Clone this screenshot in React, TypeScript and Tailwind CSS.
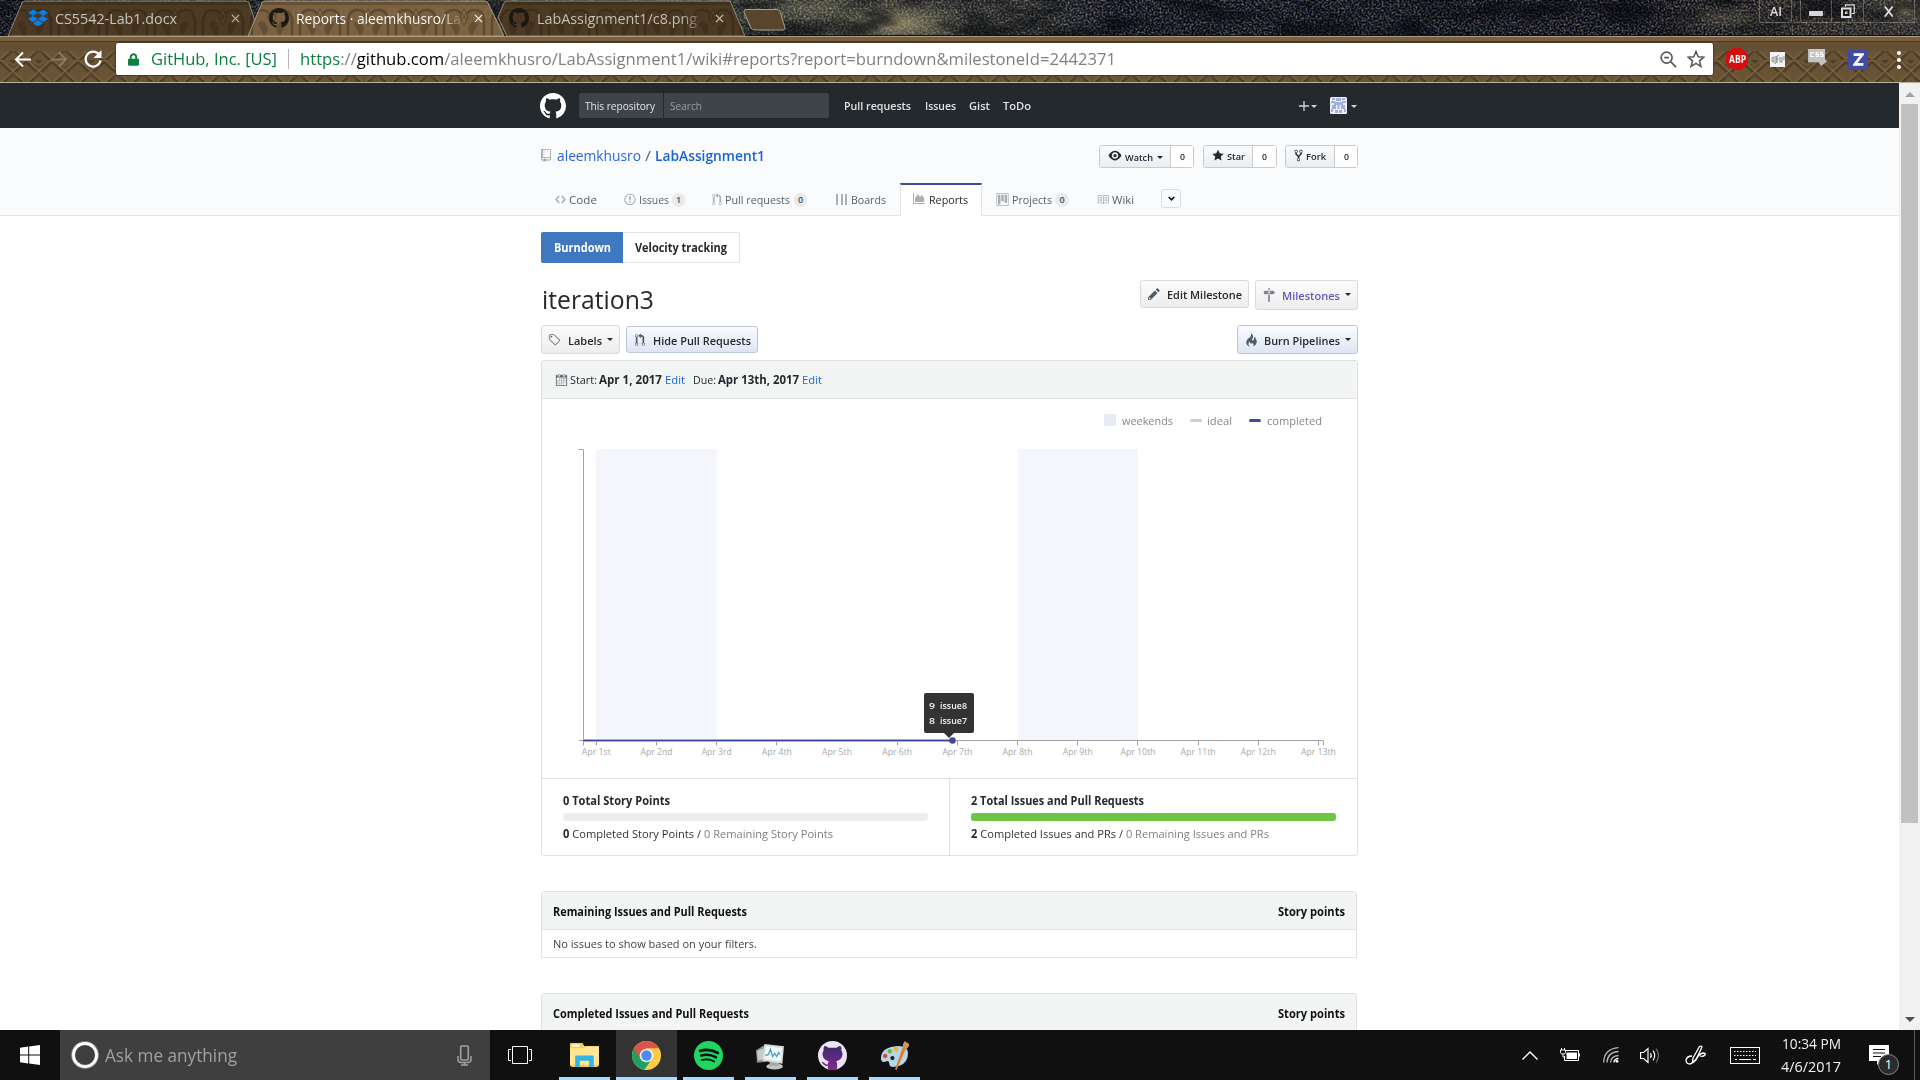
import React, { useLayoutEffect, useRef } from "react";
import { FaDropbox, FaLock } from "react-icons/fa";

const P = {
  github:
    "M8 0C3.58 0 0 3.58 0 8c0 3.54 2.29 6.53 5.47 7.59.4.07.55-.17.55-.38 0-.19-.01-.82-.01-1.49-2.01.37-2.53-.49-2.69-.94-.09-.23-.48-.94-.82-1.13-.28-.15-.68-.52-.01-.53.63-.01 1.08.58 1.23.82.72 1.21 1.87.87 2.33.66.07-.52.28-.87.51-1.07-1.78-.2-3.64-.89-3.64-3.95 0-.87.31-1.59.82-2.15-.08-.2-.36-1.02.08-2.12 0 0 .67-.21 2.2.82.64-.18 1.32-.27 2-.27.68 0 1.36.09 2 .27 1.53-1.04 2.2-.82 2.2-.82.44 1.1.16 1.92.08 2.12.51.56.82 1.27.82 2.15 0 3.07-1.87 3.75-3.65 3.95.29.25.54.73.54 1.48 0 1.07-.01 1.93-.01 2.2 0 .21.15.46.55.38A8.013 8.013 0 0 0 16 8c0-4.42-3.58-8-8-8z",
  repo: "M4 9H3V8h1v1zm0-3H3v1h1V6zm0-2H3v1h1V4zm0-2H3v1h1V2zm8-1v12c0 .55-.45 1-1 1H6v2l-1.5-1.5L3 16v-2H1c-.55 0-1-.45-1-1V1c0-.55.45-1 1-1h10c.55 0 1 .45 1 1zm-1 10H1v2h2v-1h3v1h5v-2zm0-10H2v9h9V1z",
  code: "M9.5 3L8 4.5 11.5 8 8 11.5 9.5 13 14 8 9.5 3zm-5 0L0 8l4.5 5L6 11.5 2.5 8 6 4.5 4.5 3z",
  issue:
    "M7 2.3c3.14 0 5.7 2.56 5.7 5.7s-2.56 5.7-5.7 5.7A5.71 5.71 0 0 1 1.3 8c0-3.14 2.56-5.7 5.7-5.7zM7 1C3.14 1 0 4.14 0 8s3.14 7 7 7 7-3.14 7-7-3.14-7-7-7zm1 3H6v5h2V4zm0 6H6v2h2v-2z",
  pr: "M11 11.28V5c-.03-.78-.34-1.47-.94-2.06C9.46 2.35 8.78 2.03 8 2H7V0L4 3l3 3V4h1c.27.02.48.11.69.31.21.2.3.42.31.69v6.28A1.993 1.993 0 0 0 10 15a1.993 1.993 0 0 0 1-3.72zm-1 2.92c-.66 0-1.2-.55-1.2-1.2 0-.65.55-1.2 1.2-1.2.65 0 1.2.55 1.2 1.2 0 .65-.55 1.2-1.2 1.2zM4 3c0-1.11-.89-2-2-2a1.993 1.993 0 0 0-1 3.72v6.56A1.993 1.993 0 0 0 2 15a1.993 1.993 0 0 0 1-3.72V4.72c.59-.34 1-.98 1-1.72zm-.8 10c0 .66-.55 1.2-1.2 1.2-.65 0-1.2-.55-1.2-1.2 0-.65.55-1.2 1.2-1.2.65 0 1.2.55 1.2 1.2zM2 4.2C1.34 4.2.8 3.65.8 3c0-.65.55-1.2 1.2-1.2.65 0 1.2.55 1.2 1.2 0 .65-.55 1.2-1.2 1.2z",
  project:
    "M10 12h3V2h-3v10zm-4-2h3V2H6v8zm-4 4h3V2H2v12zm-1 1h13V1H1v14zM14 0H1a1 1 0 0 0-1 1v14a1 1 0 0 0 1 1h13a1 1 0 0 0 1-1V1a1 1 0 0 0-1-1z",
  book: "M3 5h4v1H3V5zm0 3h4V7H3v1zm0 2h4V9H3v1zm11-5h-4v1h4V5zm0 2h-4v1h4V7zm0 2h-4v1h4V9zm2-6v9c0 .55-.45 1-1 1H9.5l-1 1-1-1H2c-.55 0-1-.45-1-1V3c0-.55.45-1 1-1h5.5l1 1 1-1H15c.55 0 1 .45 1 1zm-8 .5L7.5 3H2v9h6V3.500zm7-.5H9.500l-.5.5V12h6V3z",
  eye: "M8.06 2C3 2 0 8 0 8s3 6 8.060 6C13 14 16 8 16 8s-3-6-7.940-6zM8 12c-2.200 0-4-1.780-4-4 0-2.200 1.800-4 4-4 2.220 0 4 1.800 4 4 0 2.220-1.780 4-4 4zm2-4c0 1.110-.890 2-2 2-1.110 0-2-.890-2-2 0-1.110.890-2 2-2 1.110 0 2 .890 2 2z",
  star: "M14 6l-4.9-.64L7 1 4.9 5.36 0 6l3.6 3.26L2.67 14 7 11.67 11.33 14l-.93-4.74L14 6z",
  fork: "M8 1a1.993 1.993 0 0 0-1 3.72V6L5 8 3 6V4.72A1.993 1.993 0 0 0 2 1a1.993 1.993 0 0 0-1 3.72V6.5l3 3v1.78A1.993 1.993 0 0 0 5 15a1.993 1.993 0 0 0 1-3.72V9.5l3-3V4.72A1.993 1.993 0 0 0 8 1zM2 4.2C1.34 4.2.8 3.65.8 3c0-.65.55-1.2 1.2-1.2.65 0 1.2.55 1.2 1.2 0 .65-.55 1.2-1.2 1.2zm3 10c-.66 0-1.2-.55-1.2-1.2 0-.65.55-1.2 1.2-1.2.65 0 1.2.55 1.2 1.2 0 .65-.55 1.2-1.2 1.2zm3-10c-.66 0-1.2-.55-1.2-1.2 0-.65.55-1.2 1.2-1.2.65 0 1.2.55 1.2 1.2 0 .65-.55 1.2-1.2 1.2z",
  pencil:
    "M0 12v3h3l8-8-3-3-8 8zm3 2H1v-2h1v1h1v1zm10.3-9.3L12 6 9 3l1.3-1.3a.996.996 0 0 1 1.41 0l1.59 1.59c.39.39.39 1.02 0 1.41z",
  milestone:
    "M8 2H6V0h2v2zm4 5H2c-.55 0-1-.45-1-1V4c0-.55.45-1 1-1h10l2 2-2 2zM8 4H6v2h2V4zM6 16h2V8H6v8z",
  tag: "M7.73 1.73C7.26 1.26 6.62 1 5.96 1H3.5C2.13 1 1 2.13 1 3.5v2.47c0 .66.27 1.3.73 1.77l6.06 6.06c.39.39 1.02.39 1.41 0l4.59-4.59a.996.996 0 0 0 0-1.41L7.73 1.73zM2.38 7.09c-.31-.3-.47-.7-.47-1.13V3.5c0-.88.72-1.59 1.59-1.59h2.47c.42 0 .83.16 1.13.47l6.14 6.13-4.73 4.73-6.13-6.15zM3.01 3h2v2H3V3h.01z",
  flame:
    "M5.05.31c.81 2.17.41 3.38-.52 4.31C3.55 5.67 1.98 6.45.9 7.98c-1.45 2.05-1.7 6.53 3.53 7.7-2.2-1.16-2.67-4.52-.3-6.61-.61 2.03.53 3.33 1.94 2.86 1.39-.47 2.3.53 2.27 1.67-.02.78-.31 1.44-1.13 1.81 3.42-.59 4.78-3.42 4.78-5.56 0-2.84-2.53-3.22-1.25-5.61-1.52.13-2.03 1.13-1.89 2.75.09 1.08-1.02 1.8-1.86 1.33-.67-.41-.66-1.19-.06-1.78C8.18 5.31 8.68 2.45 5.05.32L5.03.3l.02.01z",
  calendar:
    "M13 2h-1v1.5c0 .28-.22.5-.5.5h-2c-.28 0-.5-.22-.5-.5V2H6v1.5c0 .28-.22.5-.5.5h-2c-.28 0-.5-.22-.5-.5V2H2c-.55 0-1 .45-1 1v11c0 .55.45 1 1 1h11c.55 0 1-.45 1-1V3c0-.55-.45-1-1-1zm0 12H2V5h11v9zM5 3H4V1h1v2zm6 0h-1V1h1v2zM6 7H5V6h1v1zm2 0H7V6h1v1zm2 0H9V6h1v1zm2 0h-1V6h1v1zM4 9H3V8h1v1zm2 0H5V8h1v1zm2 0H7V8h1v1zm2 0H9V8h1v1zm2 0h-1V8h1v1zm-8 2H3v-1h1v1zm2 0H5v-1h1v1zm2 0H7v-1h1v1zm2 0H9v-1h1v1zm2 0h-1v-1h1v1zm-8 2H3v-1h1v1zm2 0H5v-1h1v1zm2 0H7v-1h1v1zm2 0H9v-1h1v1z",
};

function Oct({ d, vw = 16, className = "" }: { d: string; vw?: number; className?: string }) {
  return (
    <svg viewBox={`0 0 ${vw} 16`} className={`block shrink-0 fill-current ${className}`}>
      <path fillRule="evenodd" d={d} />
    </svg>
  );
}

/** A single line of text squeezed or stretched to the width of its box. */
function T({ className = "", children }: { className?: string; children: React.ReactNode }) {
  const outer = useRef<HTMLSpanElement>(null);
  const inner = useRef<HTMLSpanElement>(null);
  useLayoutEffect(() => {
    const o = outer.current;
    const i = inner.current;
    if (o && i && i.offsetWidth) {
      i.style.transform = "none";
      i.style.transform = `scaleX(${o.clientWidth / i.getBoundingClientRect().width})`;
    }
  }, []);
  return (
    <span ref={outer} className={`block shrink-0 whitespace-nowrap ${className}`}>
      <span ref={inner} className="inline-block origin-left">
        {children}
      </span>
    </span>
  );
}

function Caret({ className = "" }: { className?: string }) {
  return (
    <svg viewBox="0 0 6 3" className={`block h-[3px] w-[6px] shrink-0 fill-current ${className}`}>
      <path d="M0 0h6L3 3z" />
    </svg>
  );
}

function Textures() {
  return (
    <svg className="absolute h-0 w-0">
      <defs>
        <pattern id="lattice" width="26" height="24" patternUnits="userSpaceOnUse">
          <rect width="26" height="24" fill="#695335" />
          <path d="M0 2L13 14L26 2M0 26L13 14M13 14L26 26M0 -10L13 2L26 -10" stroke="#503e26" strokeWidth="2.600" fill="none" />
          <path d="M0 -1L13 11L26 -1M0 23L13 11L26 23" stroke="#7b6343" strokeWidth="1.200" fill="none" />
          <path d="M8 4l5 4l5-4M8 18l5-4l5 4" stroke="#5b472d" strokeWidth="1.500" fill="none" />
        </pattern>
        <pattern id="carving" width="48" height="36" patternUnits="userSpaceOnUse">
          <rect width="48" height="36" fill="#7a6141" />
          <path d="M0 2h48v3H0z" fill="#66502f" />
          <path d="M4 36V22q0-12 10-12q6 0 8 6M44 36V22q0-12-10-12q-6 0-8 6" stroke="#604a2d" strokeWidth="2.500" fill="none" />
          <path d="M24 8l5 9l-5 9l-5-9zM10 24q4-6 8 0q4 8-2 12M38 24q-4-6-8 0q-4 8 2 12" fill="#654e31" />
          <path d="M24 11l2 6l-2 6l-2-6zM1 8q4 4 0 10M47 8q-4 4 0 10" stroke="#8a6f49" fill="none" />
        </pattern>
        <filter id="stars" x="0" y="0" width="100%" height="100%" colorInterpolationFilters="sRGB">
          <feTurbulence type="fractalNoise" baseFrequency="0.5" numOctaves="2" seed="8" />
          <feColorMatrix values="1.500 .5 0 0 -.84  1.200 .8 0 0 -.84  1.100 .5 .5 0 -.85  0 0 0 0 1" />
        </filter>
        <filter id="cloud" x="0" y="0" width="100%" height="100%" colorInterpolationFilters="sRGB">
          <feTurbulence type="fractalNoise" baseFrequency="0.02 0.05" numOctaves="4" seed="21" />
          <feColorMatrix values="0 0 0 0 .02  0 0 0 0 .03  0 0 0 0 .05  3.400 0 0 0 -1.500" />
        </filter>
        <radialGradient id="glow">
          <stop offset="0" stopColor="#c5b585" stopOpacity=".6" />
          <stop offset="1" stopColor="#7c7a5c" stopOpacity="0" />
        </radialGradient>
        <linearGradient id="sky">
          <stop offset="0" stopColor="#11151c" stopOpacity=".4" />
          <stop offset=".38" stopColor="#58634f" stopOpacity=".45" />
          <stop offset=".46" stopColor="#6a6a4e" stopOpacity=".45" />
          <stop offset=".54" stopColor="#4a4e42" stopOpacity=".4" />
          <stop offset=".58" stopColor="#141a26" stopOpacity=".4" />
          <stop offset=".85" stopColor="#10131a" stopOpacity=".4" />
          <stop offset=".93" stopColor="#45402f" stopOpacity=".4" />
          <stop offset="1" stopColor="#4c4b3c" stopOpacity=".45" />
        </linearGradient>
      </defs>
    </svg>
  );
}

function Sky() {
  return (
    <svg className="absolute inset-0 h-[35px] w-full" viewBox="0 0 1920 35">
      <rect width="1920" height="35" filter="url(#stars)" />
      <rect width="1920" height="35" fill="url(#sky)" />
      <ellipse cx="900" cy="24" rx="70" ry="22" fill="url(#glow)" />
      <ellipse cx="810" cy="8" rx="60" ry="16" fill="url(#glow)" opacity=".4" />
      <ellipse cx="1720" cy="18" rx="60" ry="14" fill="url(#glow)" opacity=".3" />
      <ellipse cx="1905" cy="10" rx="40" ry="16" fill="url(#glow)" opacity=".7" />
      <rect width="1920" height="35" filter="url(#cloud)" opacity=".6" />
    </svg>
  );
}

function CloseX({ className }: { className: string }) {
  return (
    <svg viewBox="0 0 10 10" className={`h-[9px] w-[9px] shrink-0 ${className}`}>
      <path d="M1 1l8 8M9 1l-8 8" stroke="currentColor" strokeWidth="1.400" />
    </svg>
  );
}

function TabStrip() {
  return (
    <div className="relative flex h-[36px] overflow-hidden bg-[#101418]">
      <Sky />
      <div className="relative ml-[7px] flex h-[36px] w-[254px] items-center">
        <svg className="absolute inset-0 h-full w-full" viewBox="0 0 254 36">
          <path d="M1 36L15 3q1-2 3-2H239q2 0 3 2L253 36z" fill="url(#carving)" />
          <path d="M1 36L15 3q1-2 3-2H239q2 0 3 2L253 36z" fill="#1c1207" fillOpacity=".5" stroke="#8f8778" />
        </svg>
        <FaDropbox className="relative ml-[21px] h-[20px] w-[20px] shrink-0 text-[#0a7de8]" />
        <T className="relative ml-[7px] w-[122px] text-[15px] leading-[36px] text-[#c9c4bc]">CS5542-Lab1.docx</T>
        <CloseX className="relative ml-[54px] text-[#b9b3a8]" />
      </div>
      <div className="relative z-10 -ml-[13px] flex h-[36px] w-[258px] items-center">
        <svg className="absolute inset-0 h-full w-full" viewBox="0 0 258 36">
          <path d="M0 36L14 3q1-2 3-2H237q2 0 3 2L256 36z" fill="url(#carving)" stroke="#a89c86" />
        </svg>
        <Oct d={P.github} className="relative ml-[21px] h-[20px] w-[20px] text-[#1b1712]" />
        <T className="relative ml-[7px] w-[165px] text-[15px] leading-[36px] text-white">
          <span className="bg-linear-to-r from-white from-88% to-white/10 bg-clip-text text-transparent">
            Reports · aleemkhusro/La
          </span>
        </T>
        <CloseX className="relative ml-[13px] text-[#f3efe8]" />
      </div>
      <div className="relative -ml-[9px] flex h-[36px] w-[252px] items-center">
        <svg className="absolute inset-0 h-full w-full" viewBox="0 0 252 36">
          <path d="M10 36L1 17L7 3q1-2 3-2H231q2 0 3 2L248 36z" fill="url(#carving)" />
          <path d="M10 36L1 17L7 3q1-2 3-2H231q2 0 3 2L248 36z" fill="#1c1207" fillOpacity=".5" stroke="#8f8778" />
        </svg>
        <Oct d={P.github} className="relative ml-[12px] h-[20px] w-[20px] text-[#1b1712]" />
        <T className="relative ml-[8px] w-[160px] text-[15px] leading-[36px] text-[#c9c4bc]">
          <span className="bg-linear-to-r from-[#c9c4bc] from-90% to-[#7a7061] bg-clip-text text-transparent">
            LabAssignment1/c8.png
          </span>
        </T>
        <CloseX className="relative ml-[18px] text-[#c9c4bc]" />
      </div>
      <svg className="relative -ml-[6px] mt-[8px] h-[24px] w-[44px]" viewBox="0 0 44 24">
        <path d="M2 1.500H33q3 0 4 2L42 20q0 2-2 2H12q-3 0-4-2L1 4q0-2 2-2.500z" fill="#59452c" stroke="#a79f90" />
      </svg>
      <div className="relative ml-auto mr-[5px] flex">
        <div className="mr-[8px] flex h-[23px] w-[33px] justify-center rounded-b-[3px] border border-t-0 border-white/25">
          <T className="w-[12px] text-[13px] font-semibold leading-[22px] text-[#dcdcdc]">AI</T>
        </div>
        <div className="flex h-[23px] w-[115px] rounded-b-[3px] border border-t-0 border-white/25">
          <div className="flex w-[31px] items-center justify-center border-r border-white/25">
            <div className="mt-[4px] h-[5px] w-[14px] rounded-[1px] bg-[#d6d6d6]" />
          </div>
          <div className="flex w-[32px] items-center justify-center border-r border-white/25">
            <svg viewBox="0 0 14 14" className="h-[14px] w-[14px]" fill="none" stroke="#dcdcdc">
              <path d="M4.500 3V.800H13.200V9.500H11" strokeWidth="1.200" />
              <rect x="1" y="4.500" width="8.500" height="8.500" strokeWidth="2" />
              <rect x="4.500" y="8" width="1.500" height="1.500" />
            </svg>
          </div>
          <div className="flex flex-1 items-center justify-center">
            <svg viewBox="0 0 12 12" className="h-[11px] w-[12px]" stroke="#dcdcdc" strokeWidth="2">
              <path d="M1.500 0.500l8.500 11M10 .500L1.500 11.500" />
            </svg>
          </div>
        </div>
      </div>
    </div>
  );
}

function Toolbar() {
  return (
    <div className="relative h-[47px] border-b border-[#b9b0a2] bg-[#6e5637]">
      <svg className="absolute inset-0 h-[46px] w-full">
        <rect width="1920" height="47" fill="url(#lattice)" />
        <rect width="1920" height="15" fill="#655033" />
        <rect width="1920" height="6" fill="#7b6040" />
        <rect width="1920" height="1" fill="#a89c86" />
        <rect y="5" width="1920" height="1" fill="#4a3820" />
      </svg>
      <div className="relative flex h-[46px] items-center">
        <svg viewBox="0 0 18 16" className="ml-[14px] h-[17px] w-[18px]" fill="none" stroke="#fff" strokeWidth="2">
          <path d="M17 8H2M9 1L2 8l7 7" />
        </svg>
        <svg viewBox="0 0 18 16" className="ml-[18px] h-[17px] w-[18px]" fill="none" stroke="#8f7c60" strokeWidth="2">
          <path d="M1 8h15M9 1l7 7l-7 7" />
        </svg>
        <svg viewBox="0 0 18 18" className="ml-[16px] h-[18px] w-[18px]" fill="none" stroke="#fff" strokeWidth="2.200">
          <path d="M15.200 4.600A7.500 7.500 0 1 0 16.500 10.500" />
          <path d="M17.500 0v8h-8z" fill="#fff" stroke="none" />
        </svg>
        <div className="ml-[13px] flex h-[34px] w-[1599px] items-center rounded-[3px] border border-[#4b3a25] bg-white">
          <FaLock className="ml-[12px] h-[13px] w-[11px] shrink-0 text-[#0b8043]" />
          <T className="ml-[12px] w-[126px] text-[17px] leading-[32px] text-[#0b8043]">GitHub, Inc. [US]</T>
          <div className="ml-[11px] h-[20px] w-px bg-[#b5b5b5]" />
          <T className="ml-[11px] w-[816px] text-[17px] leading-[32px] text-[#808080]">
            <span className="text-[#0b8043]">https</span>://<span className="text-black">github.com</span>
            /aleemkhusro/LabAssignment1/wiki#reports?report=burndown&amp;milestoneId=2442371
          </T>
          <svg viewBox="0 0 18 18" className="ml-auto h-[17px] w-[17px]" fill="none" stroke="#5a5a5a" strokeWidth="1.800">
            <circle cx="7" cy="7" r="5.800" />
            <path d="M11.500 11.500l5.500 5.500M4.500 7h5" />
          </svg>
          <svg viewBox="0 0 18 18" className="ml-[10px] mr-[8px] h-[18px] w-[18px]" fill="none" stroke="#5a5a5a" strokeWidth="1.600">
            <path d="M9 1.500l2.200 5.300l5.700.4l-4.400 3.700l1.400 5.500L9 13.400l-4.900 3l1.400-5.500L1.100 7.200l5.700-.4z" />
          </svg>
        </div>
        <div className="ml-[12px] flex h-[22px] w-[22px] items-center justify-center bg-[#d40d0d] [clip-path:polygon(30%_0,70%_0,100%_30%,100%_70%,70%_100%,30%_100%,0_70%,0_30%)]">
          <T className="w-[17px] text-[10px] font-bold leading-[22px] text-white">ABP</T>
        </div>
        <div className="ml-[22px] flex h-[15px] w-[15px] items-center justify-center bg-[#f4f4f4]">
          <svg viewBox="0 0 14 10" className="h-[10px] w-[14px]" fill="none" stroke="#9b9b9b" strokeWidth="1.200">
            <path d="M1 5.500q0-2.500 2-2.500v5q-2 0-2-2.500M5 2v6q0 1.500-1.500 1.500M6 9V3q0-1.500 2-1.500M6 5h2M9 3v5h2V3M13 2v4" />
          </svg>
        </div>
        <svg viewBox="0 0 20 18" className="mb-[3px] ml-[23px] h-[17px] w-[19px]">
          <path d="M0 0h18v11l2 2l-6 5l-3-4H0z" fill="#c4c4c4" />
          <path d="M6 4H3V8h3M11 4H8.500v2H11v2H8M16 4h-2.500v2H16v2h-3" fill="none" stroke="#fff" strokeWidth="1.200" />
        </svg>
        <div className="ml-[21px] flex h-[21px] w-[20px] items-center justify-center bg-[#3f4da0] text-white">
          <svg viewBox="0 0 10 12" className="h-[13px] w-[11px]" fill="none" stroke="currentColor" strokeWidth="2.400">
            <path d="M.5 1.500h8L1.500 10.500H9.500" />
          </svg>
        </div>
        <div className="ml-[29px] mt-[2px] flex flex-col gap-[3px]">
          <div className="h-[4px] w-[4px] rounded-full bg-white" />
          <div className="h-[4px] w-[4px] rounded-full bg-white" />
          <div className="h-[4px] w-[4px] rounded-full bg-white" />
        </div>
      </div>
    </div>
  );
}

function SiteHeader() {
  return (
    <div className="flex h-[45px] items-center bg-[#24292e] pl-[540px]">
      <Oct d={P.github} className="h-[26px] w-[26px] text-white" />
      <div className="ml-[13px] flex h-[25px] w-[250px] items-center rounded-[2px] bg-[#3f4448]">
        <T className="ml-[6px] w-[70px] text-[11.5px] leading-[24px] text-[#e3e4e5]">This repository</T>
        <div className="ml-[8px] h-full w-px bg-[#24292e]" />
        <T className="ml-[6px] w-[32px] text-[11.5px] leading-[24px] text-[#999da1]">Search</T>
      </div>
      <T className="ml-[15px] w-[67px] text-[11.5px] font-semibold leading-[24px] text-[#e1e2e3]">Pull requests</T>
      <T className="ml-[14px] w-[31px] text-[11.5px] font-semibold leading-[24px] text-[#e1e2e3]">Issues</T>
      <T className="ml-[13px] w-[21px] text-[11.5px] font-semibold leading-[24px] text-[#e1e2e3]">Gist</T>
      <T className="ml-[13px] w-[28px] text-[11.5px] font-semibold leading-[24px] text-[#e1e2e3]">ToDo</T>
      <svg viewBox="0 0 10 10" className="ml-[268px] h-[10px] w-[10px]" stroke="#d3d4d5" strokeWidth="1.300">
        <path d="M5 0v10M0 5h10" />
      </svg>
      <Caret className="ml-[2px] mt-[2px] text-[#d3d4d5]" />
      <svg viewBox="0 0 17 17" className="ml-[13px] h-[17px] w-[17px]">
        <rect width="17" height="17" rx="1.500" fill="#eef1fa" />
        <path
          d="M2 1h3v2H2zM6 1h5v3H6zM12 1h3v2h-3zM1 4h4v2H1zM12 4h4v2h-4zM4 5h9v3H4zM2 8h4v4H2zM7.500 7h2v5h-2zM11 8h4v4h-4zM1 12h2v3H1zM5 13h3v3H5zM9 13h3v3H9zM14 12h2v3h-2z"
          fill="#9fb0e0"
        />
      </svg>
      <Caret className="ml-[4px] mt-[2px] text-[#d3d4d5]" />
    </div>
  );
}

function CountButton({ icon, label, width, count }: { icon: React.ReactNode; label: React.ReactNode; width: string; count: string }) {
  return (
    <div className="flex h-[23px] rounded-[3px] border border-[#c9cccf]">
      <div className={`flex items-center rounded-l-[2px] bg-linear-to-b from-[#fafbfc] to-[#e9eef2] text-[#24292e] ${width}`}>
        {icon}
        {label}
      </div>
      <div className={`flex items-center justify-center border-l border-[#c9cccf] bg-white ${count}`}>
        <T className="w-[5px] text-[9.5px] font-semibold leading-[22px] text-[#24292e]">0</T>
      </div>
    </div>
  );
}

function Badge({ children, className }: { children: string; className: string }) {
  return (
    <div className={`flex h-[14px] items-center justify-center rounded-full bg-[#e7e9eb] ${className}`}>
      <span className="text-[9px] font-semibold leading-[14px] text-[#4a5057]">{children}</span>
    </div>
  );
}

function RepoHeader() {
  return (
    <div className="h-[88px] border-b border-[#e1e4e8] bg-[#fafbfc]">
      <div className="ml-[541px] flex h-[55px] w-[817px] items-start">
        <Oct d={P.repo} vw={12} className="mt-[21px] h-[13px] w-[10px] text-[#9da1a6]" />
        <T className="ml-[6px] mt-[17px] w-[84px] text-[14.5px] leading-[22px] text-[#2a68d8]">aleemkhusro</T>
        <T className="ml-[4px] mt-[17px] w-[6px] text-[14.5px] leading-[22px] text-[#586069]">/</T>
        <T className="ml-[4px] mt-[17px] w-[110px] text-[14.5px] font-semibold leading-[22px] text-[#1763d6]">LabAssignment1</T>
        <div className="ml-auto mt-[17px] flex">
          <CountButton
            width="w-[70px]"
            count="w-[23px]"
            icon={<Oct d={P.eye} className="mb-[2px] ml-[8px] h-[13px] w-[14px]" />}
            label={
              <>
                <T className="ml-[3px] mt-[2px] w-[28px] text-[9.5px] font-semibold leading-[20px]">Watch</T>
                <Caret className="ml-[4px] mt-[2px]" />
              </>
            }
          />
          <div className="w-[9px]" />
          <CountButton
            width="w-[48px]"
            count="w-[24px]"
            icon={<Oct d={P.star} vw={14} className="mb-[2px] ml-[8px] h-[13px] w-[12px]" />}
            label={<T className="ml-[3px] w-[18px] text-[9.5px] font-semibold leading-[20px]">Star</T>}
          />
          <div className="w-[8px]" />
          <CountButton
            width="w-[48px]"
            count="w-[23px]"
            icon={<Oct d={P.fork} vw={10} className="mb-[2px] ml-[8px] h-[13px] w-[9px]" />}
            label={<T className="ml-[3px] w-[20px] text-[9.5px] font-semibold leading-[20px]">Fork</T>}
          />
        </div>
      </div>
      <div className="flex h-[33px] items-center pl-[555px] text-[11.5px] leading-[30px] text-[#586069]">
        <Oct d={P.code} vw={14} className="h-[13px] w-[11px] text-[#abaeb2]" />
        <T className="ml-[3px] w-[28px]">Code</T>
        <Oct d={P.issue} vw={14} className="ml-[27px] h-[13px] w-[12px] text-[#abaeb2]" />
        <T className="ml-[3px] w-[30px]">Issues</T>
        <Badge className="ml-[3px] w-[13px]">1</Badge>
        <Oct d={P.pr} vw={12} className="ml-[27px] h-[13px] w-[10px] text-[#abaeb2]" />
        <T className="ml-[3px] w-[65px]">Pull requests</T>
        <Badge className="ml-[4px] w-[13px]">0</Badge>
        <div className="ml-[29px] flex h-[11px] w-[11px] justify-between">
          <div className="w-[2px] bg-[#abaeb2]" />
          <div className="w-[2px] bg-[#abaeb2]" />
          <div className="w-[2px] bg-[#abaeb2]" />
        </div>
        <T className="ml-[4px] w-[35px]">Boards</T>
        <div className="ml-[14px] flex h-[33px] w-[82px] items-center border-x border-t-2 border-x-[#e1e4e8] border-t-[#3f4a9a] bg-white text-[#24292e]">
          <svg viewBox="0 0 12 11" className="mb-[4px] ml-[12px] h-[11px] w-[12px]" fill="#abaeb2">
            <path d="M0 0h1v10h11v1H0zM2 9V5l3-4l2 3l2-2l2 3v4z" />
          </svg>
          <T className="mb-[2px] ml-[4px] w-[39px] leading-[28px]">Reports</T>
        </div>
        <Oct d={P.project} vw={15} className="ml-[14px] h-[13px] w-[13px] text-[#abaeb2]" />
        <T className="ml-[3px] w-[40px]">Projects</T>
        <Badge className="ml-[3px] w-[14px]">0</Badge>
        <Oct d={P.book} className="ml-[28px] h-[13px] w-[12px] text-[#abaeb2]" />
        <T className="ml-[3px] w-[22px]">Wiki</T>
        <div className="mb-[3px] ml-[27px] flex h-[19px] w-[20px] items-center justify-center rounded-[3px] border border-[#d8dadd] bg-[#fafbfc]">
          <svg viewBox="0 0 8 5" className="h-[5px] w-[7px]" fill="none" stroke="#111" strokeWidth="1.900">
            <path d="M.8.800L4 4L7.200.800" />
          </svg>
        </div>
      </div>
    </div>
  );
}

const grayBtn = "flex items-center rounded-[3px] border border-[#d8dadb] bg-linear-to-b from-[#fcfcfc] to-[#ededed]";
const blueBtn = "flex items-center rounded-[3px] border border-[#bac6dd] bg-linear-to-b from-[#f9fbff] to-[#dde5f4]";

const ticks: [string, number][] = [
  ["1st", 29],
  ["2nd", 32],
  ["3rd", 30],
  ["4th", 30],
  ["5th", 30],
  ["6th", 30],
  ["7th", 30],
  ["8th", 30],
  ["9th", 30],
  ["10th", 35],
  ["11th", 35],
  ["12th", 35],
  ["13th", 35],
];

function Chart() {
  return (
    <div className="relative h-[379px]">
      <div className="flex h-[45px] items-center justify-end pb-[1px] pr-[35px] text-[11.5px] leading-[20px] text-[#868686]">
        <div className="mb-[2px] h-[12px] w-[12px] rounded-[1px] bg-[#e9ebf7]" />
        <T className="ml-[6px] w-[51px]">weekends</T>
        <div className="mb-[1px] ml-[17px] h-[3px] w-[12px] rounded-full bg-[#cdcdcd]" />
        <T className="ml-[5px] w-[25px]">ideal</T>
        <div className="mb-[1px] ml-[17px] h-[3px] w-[12px] rounded-full bg-[#3f4a9a]" />
        <T className="ml-[6px] w-[55px]">completed</T>
      </div>
      <svg viewBox="542 444 815 333" className="block h-[333px] w-[815px]">
        <rect x="596" y="449" width="121" height="291" fill="#f5f6fc" />
        <rect x="1018" y="449" width="120" height="291" fill="#f5f6fc" />
        <g stroke="#a3a3a3" fill="none">
          <path d="M579 449.500H583.500V745.500M579 740.500H1323.500V745.500" />
          {ticks.map(([d], i) => (i === 4 ? null : <path key={d} d={`M${Math.floor(596 + i * 60.2) + 0.5} 740.500v5`} />))}
        </g>
        {ticks.map(([d, w], i) => (
          <text
            key={d}
            x={596.3 + i * 60.18}
            y="755"
            fontSize="9"
            textAnchor="middle"
            textLength={w}
            lengthAdjust="spacingAndGlyphs"
            fill="#a9a9a9"
          >
            {"Apr " + d}
          </text>
        ))}
        <path d="M583 740.500H950" stroke="#c5cae8" strokeWidth="3" />
        <path d="M583 740.500H950" stroke="#3f4a9a" strokeWidth="1.400" />
        <circle cx="952.5" cy="740.500" r="3.300" fill="#3f4a9a" />
      </svg>
      <div className="absolute left-[382px] top-[294px] flex h-[40px] w-[50px] flex-col rounded-[2px] bg-[#333] pl-[5px] pt-[5px] text-[9.5px] font-semibold leading-[15px] text-[#f2f2f2]">
        <div className="flex">
          <T className="w-[6px]">9</T>
          <T className="ml-[5px] w-[27px]">issue8</T>
        </div>
        <div className="flex">
          <T className="w-[6px]">8</T>
          <T className="ml-[5px] w-[27px]">issue7</T>
        </div>
        <svg viewBox="0 0 10 5" className="absolute left-[20px] top-[40px] h-[5px] w-[10px]">
          <path d="M0 0h10L5 5z" fill="#333" />
        </svg>
      </div>
    </div>
  );
}

function Summary() {
  return (
    <div className="flex h-[77px] border-t border-[#e1e1e1] text-[11.5px] leading-[16px]">
      <div className="w-[408px] border-r border-[#e1e1e1] pl-[21px] pt-[14px]">
        <T className="w-[107px] font-bold text-[#24292e]">0 Total Story Points</T>
        <div className="mt-[4px] h-[8px] w-[365px] rounded-[3px] bg-[#ededed]" />
        <T className="mt-[4px] w-[270px] leading-[18px] text-[#2f3338]">
          <b className="text-[#24292e]">0</b> Completed Story Points / <span className="text-[#7f7f7f]">0 Remaining Story Points</span>
        </T>
      </div>
      <div className="pl-[21px] pt-[14px]">
        <T className="w-[173px] font-bold text-[#24292e]">2 Total Issues and Pull Requests</T>
        <div className="mt-[4px] h-[8px] w-[365px] rounded-[3px] bg-[#6cc644]" />
        <T className="mt-[4px] w-[298px] leading-[18px] text-[#2f3338]">
          <b className="text-[#24292e]">2</b> Completed Issues and PRs / <span className="text-[#7f7f7f]">0 Remaining Issues and PRs</span>
        </T>
      </div>
    </div>
  );
}

function Report() {
  return (
    <div className="ml-[541px] w-[817px] text-[11.5px]">
      <div className="flex h-[47px] pt-[16px]">
        <div className="flex h-[31px] w-[82px] justify-center rounded-l-[2px] bg-[#4078c0]">
          <T className="w-[57px] font-bold leading-[31px] text-white">Burndown</T>
        </div>
        <div className="flex h-[31px] w-[117px] justify-center rounded-r-[2px] border border-l-0 border-[#e1e3e5]">
          <T className="w-[92px] font-bold leading-[29px] text-[#24292e]">Velocity tracking</T>
        </div>
      </div>
      <div className="flex h-[62px] items-start pt-[17px] text-[#24292e]">
        <T className="ml-[1px] mt-[4px] w-[112px] text-[25.5px] leading-[31px] text-[#24292e]">iteration3</T>
        <div className={`ml-auto h-[28px] w-[109px] ${grayBtn}`}>
          <Oct d={P.pencil} vw={14} className="ml-[7px] h-[14px] w-[12px] text-[#4e5b69]" />
          <T className="ml-[7px] mt-[1px] w-[75px] font-semibold leading-[26px]">Edit Milestone</T>
        </div>
        <div className={`ml-[6px] h-[30px] w-[103px] ${grayBtn}`}>
          <Oct d={P.milestone} vw={14} className="ml-[7px] h-[14px] w-[12px] text-[#7b8490]" />
          <T className="ml-[7px] mt-[1px] w-[58px] font-semibold leading-[28px] text-[#6558b8]">Milestones</T>
          <Caret className="mb-[1px] ml-[5px]" />
        </div>
      </div>
      <div className="flex h-[35px] items-start text-[#24292e]">
        <div className={`h-[29px] w-[79px] ${grayBtn}`}>
          <Oct d={P.tag} vw={14} className="ml-[6px] h-[14px] w-[12px] text-[#5c6773]" />
          <T className="ml-[8px] mt-[1px] w-[34px] font-semibold leading-[27px]">Labels</T>
          <Caret className="ml-[5px]" />
        </div>
        <div className={`ml-[6px] mt-[1px] h-[27px] w-[132px] ${blueBtn}`}>
          <Oct d={P.pr} vw={12} className="ml-[8px] h-[14px] w-[10px] text-[#4e5b69]" />
          <T className="ml-[8px] mt-[1px] w-[98px] font-semibold leading-[25px]">Hide Pull Requests</T>
        </div>
        <div className={`ml-auto h-[29px] w-[121px] ${blueBtn}`}>
          <Oct d={P.flame} vw={12} className="ml-[8px] h-[14px] w-[11px] text-[#4e5b69]" />
          <T className="ml-[7px] mt-[1px] w-[76px] font-semibold leading-[27px]">Burn Pipelines</T>
          <Caret className="ml-[5px]" />
        </div>
      </div>
      <div className="h-[496px] rounded-[3px] border border-[#e1e1e1]">
        <div className="flex h-[38px] items-center border-b border-[#e1e1e1] bg-[#f3f5f5] leading-[20px] text-[#24292e]">
          <Oct d={P.calendar} vw={15} className="ml-[13px] h-[14px] w-[13px] text-[#5c6773]" />
          <T className="ml-[2px] w-[27px]">Start:</T>
          <T className="ml-[2px] w-[63px] font-bold">Apr 1, 2017</T>
          <T className="ml-[3px] w-[20px] text-[#1f66d6]">Edit</T>
          <T className="ml-[8px] w-[23px]">Due:</T>
          <T className="ml-[2px] w-[81px] font-bold">Apr 13th, 2017</T>
          <T className="ml-[3px] w-[20px] text-[#1f66d6]">Edit</T>
        </div>
        <Chart />
        <Summary />
      </div>
      <div className="mt-[35px] h-[67px] w-[816px] rounded-t-[3px] border border-[#e1e1e1]">
        <div className="flex h-[38px] items-center justify-between border-b border-[#e1e1e1] bg-[#f3f5f5] px-[11px] font-bold leading-[20px] text-[#111]">
          <T className="mt-[2px] w-[194px]">Remaining Issues and Pull Requests</T>
          <T className="mt-[2px] w-[67px]">Story points</T>
        </div>
        <T className="ml-[11px] w-[204px] leading-[28px] text-[#3f3f3f]">No issues to show based on your filters.</T>
      </div>
      <div className="mt-[35px] h-[60px] w-[816px] rounded-t-[3px] border border-[#e1e1e1]">
        <div className="flex h-[38px] items-center justify-between bg-[#f3f5f5] px-[11px] font-bold leading-[20px] text-[#111]">
          <T className="mt-[2px] w-[196px]">Completed Issues and Pull Requests</T>
          <T className="mt-[2px] w-[67px]">Story points</T>
        </div>
      </div>
    </div>
  );
}

function Scrollbar() {
  return (
    <div className="flex w-[21px] flex-col items-center bg-[#f1f1f1]">
      <svg viewBox="0 0 10 5" className="mt-[9px] h-[5px] w-[10px] shrink-0">
        <path d="M0 5h10L5 0z" fill="#a3a3a3" />
      </svg>
      <div className="mt-[7px] h-[719px] w-[17px] shrink-0 bg-[#c1c1c1]" />
      <svg viewBox="0 0 10 5" className="mb-[8px] mt-auto h-[5px] w-[10px] shrink-0">
        <path d="M0 0h10L5 5z" fill="#505050" />
      </svg>
    </div>
  );
}

function TaskButton({ children, active }: { children: React.ReactNode; active?: boolean }) {
  return (
    <div className={`flex h-[50px] flex-col items-center justify-between ${active ? "w-[61px] bg-[#333]" : "w-[51px]"}`}>
      <div className="mt-[11px] h-[28px] w-[28px]">{children}</div>
      <div className="h-[3px] w-full bg-[#a9d9fb]" />
    </div>
  );
}

function Taskbar() {
  return (
    <div className="flex h-[50px] items-center bg-[#101010]">
      <svg viewBox="0 0 20 20" className="ml-[20px] h-[20px] w-[20px]" fill="#fff">
        <path d="M0 2.800L8.200 1.600V9.500H0zM9.200 1.500L20 0V9.500H9.200zM0 10.500H8.200V18.400L0 17.200zM9.200 10.500H20V20L9.200 18.500z" />
      </svg>
      <div className="ml-[20px] flex h-[50px] w-[430px] items-center bg-[#3f3f3f]">
        <svg viewBox="0 0 28 28" className="ml-[11px] h-[28px] w-[28px]" fill="none">
          <circle cx="14" cy="14" r="11.800" stroke="#9c9c9c" strokeWidth="4" />
          <circle cx="14" cy="14" r="11.600" stroke="#fff" strokeWidth="2.600" />
        </svg>
        <T className="ml-[6px] w-[132px] text-[18px] leading-[50px] text-[#a0a0a0]">Ask me anything</T>
        <svg viewBox="0 0 15 21" className="ml-auto mr-[18px] h-[21px] w-[15px]" fill="none" stroke="#a0a0a0">
          <rect x="3.700" y="1" width="7.600" height="14" rx="1" strokeWidth="1.600" />
          <path d="M1 11v3.500q0 3 3 3h7q3 0 3-3V11M7.500 17.500V20M4 20h7" strokeWidth="1.500" />
        </svg>
      </div>
      <svg viewBox="0 0 24 20" className="ml-[18px] h-[20px] w-[24px]" fill="none" stroke="#fff">
        <path d="M4.500 1.500h15v17h-15zM3 4.500H.500v11H3M21 4.500h2.500v11H21" />
      </svg>
      <div className="ml-[27px] flex">
        <TaskButton>
          <svg viewBox="0 0 28 28" className="-ml-[1px]">
            <path d="M0 3q0-1 1-1h11l2 3h14v18q0 2-2 2H2q-2 0-2-2z" fill="#f8cf50" />
            <path d="M2 3.500h7v2H2z" fill="#fff" />
            <path d="M0 7h13l2-2h13v18H0z" fill="#ffe694" />
            <path d="M5 25V15q0-1 1-1h16q1 0 1 1v10h-4.500v-6h-9v6z" fill="#35b4e8" />
          </svg>
        </TaskButton>
        <div className="w-[6px]" />
        <TaskButton active>
          <svg viewBox="0 0 28 28" className="-ml-[1px]">
            <circle cx="14" cy="14" r="14" fill="#ffcd42" />
            <path d="M14 14L1.900 7A14 14 0 0 0 12 27.850L19.500 17z" fill="#1da160" />
            <path d="M1.900 7A14 14 0 0 1 26.200 7H14L8 17.500z" fill="#de5247" />
            <circle cx="14" cy="14" r="6.600" fill="#f1f1f1" />
            <circle cx="14" cy="14" r="5" fill="#4c8bf5" />
          </svg>
        </TaskButton>
        <div className="w-[6px]" />
        <TaskButton>
          <svg viewBox="0 0 28 28" className="-ml-[1px]" fill="none" stroke="#111" strokeLinecap="round">
            <circle cx="14" cy="14" r="14" fill="#1ed760" stroke="none" />
            <path d="M6 9.500q9-2.500 17 2" strokeWidth="2.800" />
            <path d="M6.800 14q8-2 14.500 1.800" strokeWidth="2.300" />
            <path d="M7.500 18.300q7-1.600 12 1.500" strokeWidth="1.900" />
          </svg>
        </TaskButton>
        <div className="w-[11px]" />
        <TaskButton>
          <svg viewBox="0 0 28 28" className="-ml-[1px]">
            <path d="M0 9l8-5l2 16l-9 1z" fill="#8d9190" />
            <path d="M1 10l6-3l1 10l-6 2z" fill="#c9cbc8" />
            <ellipse cx="18" cy="24.500" rx="8" ry="3" fill="#c3c5c5" />
            <path d="M13 19h9v5h-9z" fill="#a5a8a8" />
            <path d="M8 3l19 2l-1.500 17L6 19z" fill="#d9dbdb" />
            <path d="M9.500 5l15.500 1.700l-1.200 12.800L8 17.400z" fill="#f2f8fc" />
            <path d="M9 14l3-1l2-5l2 7l2-3l2 3l2-4l1 2" fill="none" stroke="#4b9cc9" strokeWidth="1.300" />
          </svg>
        </TaskButton>
        <div className="w-[11px]" />
        <TaskButton>
          <svg viewBox="0 0 28 28" className="-ml-[1px]">
            <defs>
              <linearGradient id="cat" x2="0" y2="1">
                <stop offset="0" stopColor="#3d2a6e" />
                <stop offset="1" stopColor="#832a8c" />
              </linearGradient>
            </defs>
            <circle cx="14" cy="14" r="14" fill="#e9e6f6" />
            <path
              d="M6 5q2-.5 4 1.500h8Q20 4.500 22 5q1 2 .5 4q1.500 2 1 5q-1 4.500-6 5.500q1 1 1 3V27.500q-4.500 1.500-9 0V24q-3 .5-4.500-1.500L3.500 20q2 0 3.500 2q1 1 2.500.5q0-2 1-3q-5-1-6-5.500q-.5-3 1-5Q5 7 6 5z"
              fill="url(#cat)"
            />
          </svg>
        </TaskButton>
        <div className="w-[11px]" />
        <TaskButton>
          <svg viewBox="0 0 28 28" className="-ml-[1px]">
            <path d="M1 18Q0 8 12 5.500Q26 3 27 11q.5 9-8 13Q9 27 9 22q0-4-4-2q-3 1-4-2z" fill="#b6d6ea" />
            <ellipse cx="12" cy="16.500" rx="2" ry="2" fill="#152128" />
            <circle cx="5" cy="14.500" r="2.200" fill="#e04a3a" />
            <circle cx="9.500" cy="10" r="2.200" fill="#6cb83f" />
            <circle cx="15.500" cy="8" r="2.300" fill="#f2b32c" />
            <path d="M22 6l3 1.500L16 28l-1.500-.5z" fill="#d9822b" />
            <path d="M22 6q0-4 2-6q2 2 5 3q-2 4-4 5z" fill="#c79a68" />
          </svg>
        </TaskButton>
      </div>
      <svg viewBox="0 0 16 9" className="ml-auto h-[9px] w-[16px]" fill="none" stroke="#fff" strokeWidth="1.400">
        <path d="M.5 8.500L8 1l7.500 7.500" />
      </svg>
      <svg viewBox="0 0 20 14" className="ml-[22px] h-[14px] w-[20px]" fill="none" stroke="#fff">
        <path d="M5.500 2.500h13v10H4.500V8" />
        <path d="M6.500 4.500h10.500v6.500H6.500z" fill="#fff" stroke="none" />
        <path d="M19.500 5.500v3M.5 2h5v2.500q0 1.500-2.500 1.500q-2.500 0-2.500-1.500zM1.500 0v2M4.500 0v2M3 6v3h2" />
      </svg>
      <svg viewBox="0 0 16 16" className="ml-[23px] h-[16px] w-[16px]" fill="none" stroke="#b5b5b5" strokeWidth="1.300">
        <path d="M.7 15.500Q1 2 15.500.700M4 15.500Q4.500 5 15.500 4.500M7.500 15.500Q8 9 15.500 8.500" />
        <path d="M11 15.500q0-3.500 4.500-4" stroke="#fff" />
        <circle cx="14" cy="14.300" r="1.400" fill="#fff" stroke="none" />
      </svg>
      <svg viewBox="0 0 21 19" className="ml-[21px] h-[19px] w-[21px]" fill="none" stroke="#fff" strokeWidth="1.200">
        <path d="M.6 6.500h3L8 2.500v14l-4.400-4H.6z" />
        <path d="M10.500 7q1.500 2.500 0 5M13 4.700q3.500 4.800 0 9.600" />
        <path d="M16 2.500q5 7 0 14" stroke="#777" />
      </svg>
      <svg viewBox="0 0 21 20" className="ml-[24px] h-[20px] w-[21px]" fill="none" stroke="#fff" strokeWidth="1.300">
        <path d="M8 13L14.500 1.500q2-1 2.500.5L11 15l-3.500 2z" />
        <path d="M7 11Q2 11 1 15q0 4 4 4q4-1 6-5q3-5 7-6q3 0 2 2q-2 2-5 1" />
      </svg>
      <svg viewBox="0 0 30 17" className="ml-[24px] h-[17px] w-[30px]" fill="none" stroke="#fff">
        <rect x=".5" y=".5" width="29" height="16" />
        <path d="M4 4.500h22M4 8.500h22" strokeDasharray="1.500 1.500" strokeWidth="1.200" />
        <path d="M5 12.500h2M9 12.500h12M23 12.500h3" strokeWidth="1.200" />
      </svg>
      <div className="ml-[21px] w-[60px] text-[14px] leading-[23px] text-[#f2f2f2]">
        <T className="ml-[1px] w-[59px]">10:34 PM</T>
        <T className="w-[60px]">4/6/2017</T>
      </div>
      <div className="relative ml-[28px] h-[20px] w-[20px]">
        <svg viewBox="0 0 20 20" className="h-[20px] w-[20px]">
          <path d="M0 0h20v16h-8l-4 4v-4H0z" fill="#fff" />
          <path d="M4 4.500h12M4 8h12M4 11.500h8" stroke="#111" />
        </svg>
        <div className="absolute left-[9px] top-[9px] flex h-[21px] w-[21px] items-center justify-center rounded-full border border-[#8a8a8a] bg-[#2b2b2b] text-[13px] text-white">
          1
        </div>
      </div>
      <div className="ml-[25px] mr-[5px] h-[50px] w-px bg-[#5a5a5a]" />
    </div>
  );
}

export default function App() {
  return (
    <div className="flex h-[1080px] w-[1920px] flex-col overflow-hidden bg-white font-['Open_Sans','Noto_Sans',sans-serif]">
      <Textures />
      <TabStrip />
      <Toolbar />
      <div className="flex h-[947px] overflow-hidden">
        <div className="h-[947px] w-[1899px] overflow-hidden">
          <SiteHeader />
          <RepoHeader />
          <Report />
        </div>
        <Scrollbar />
      </div>
      <Taskbar />
    </div>
  );
}
